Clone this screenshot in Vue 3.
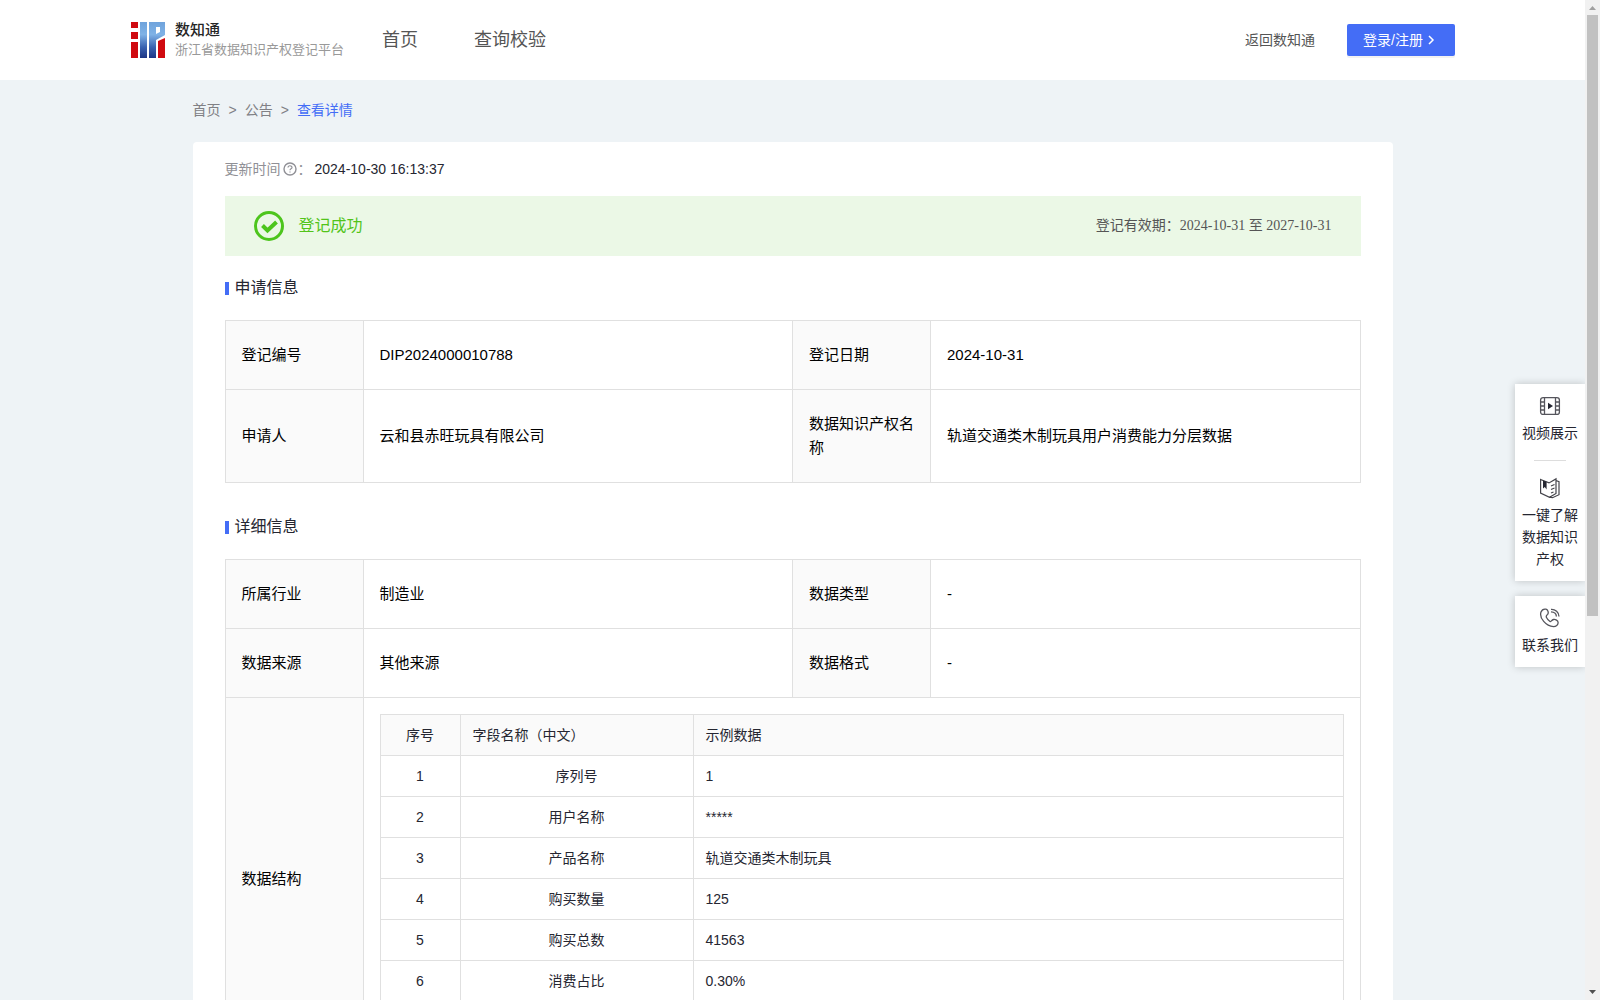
<script setup>
const applyRows = [
  ['登记编号', 'DIP2024000010788', '登记日期', '2024-10-31'],
  ['申请人', '云和县赤旺玩具有限公司', '数据知识产权名称', '轨道交通类木制玩具用户消费能力分层数据'],
]
const detailRows = [
  ['所属行业', '制造业', '数据类型', '-'],
  ['数据来源', '其他来源', '数据格式', '-'],
]
const fields = [
  ['1', '序列号', '1'],
  ['2', '用户名称', '*****'],
  ['3', '产品名称', '轨道交通类木制玩具'],
  ['4', '购买数量', '125'],
  ['5', '购买总数', '41563'],
  ['6', '消费占比', '0.30%'],
  ['', '', ''],
]
</script>

<template>
  <div class="window">
    <div class="page">
      <header class="header">
        <a class="brand" href="#">
          <svg class="logo" width="34" height="36" viewBox="0 0 34 36" aria-hidden="true">
            <defs>
              <linearGradient id="blue" gradientUnits="userSpaceOnUse" x1="0" y1="0" x2="0" y2="36">
                <stop offset="0" stop-color="#6fa3dc" />
                <stop offset="0.35" stop-color="#7fb2e6" />
                <stop offset="0.7" stop-color="#3a62b0" />
                <stop offset="1" stop-color="#1d3585" />
              </linearGradient>
            </defs>
            <path fill="#d00a10" d="M0 0h7v6H0zM0 10h7v7H0zM0 20h7v16H0zM27 19l7-3v20h-7z" />
            <path fill="url(#blue)" d="M9 0h7v36H9z" />
            <path fill="url(#blue)" fill-rule="evenodd" d="M18 0h16v13l-9 5v18h-7zM25 5v7l4-2V5z" />
          </svg>
          <span class="brand-text">
            <strong>数知通</strong>
            <small>浙江省数据知识产权登记平台</small>
          </span>
        </a>
        <nav class="nav">
          <a href="#">首页</a>
          <a href="#">查询校验</a>
        </nav>
        <a class="back" href="#">返回数知通</a>
        <button class="login" type="button">
          登录/注册
          <svg width="8" height="10" viewBox="0 0 8 10" aria-hidden="true">
            <path d="M2 1l4 4-4 4" fill="none" stroke="#fff" stroke-width="1.5" />
          </svg>
        </button>
      </header>

      <main class="main">
        <nav class="crumbs">
          <a href="#">首页</a><span>&gt;</span><a href="#">公告</a><span>&gt;</span><a class="current" href="#">查看详情</a>
        </nav>

        <section class="card">
          <div class="updated">
            <span>更新时间</span>
            <svg width="17" height="16" viewBox="0 0 17 16" fill="none" stroke="#909096" aria-hidden="true">
              <circle cx="9" cy="8" r="6" stroke-width="1.4" />
              <path d="M7 6.6c0-2.5 4-2.4 4-.2 0 1.5-2 1.300-2 2.800M9 10.400v1.200" stroke-width="1.2" />
            </svg>
            <span>：</span>
            <time>2024-10-30 16:13:37</time>
          </div>

          <div class="banner">
            <svg width="30" height="30" viewBox="0 0 30 30" fill="none" stroke="#4dc51d" aria-hidden="true">
              <circle cx="15" cy="15" r="13.500" stroke-width="3" />
              <path d="M8.500 14.500l5 5 9-8.500" stroke-width="4" />
            </svg>
            <span class="state">登记成功</span>
            <span class="valid">登记有效期：2024-10-31 至 2027-10-31</span>
          </div>

          <h2 class="title">申请信息</h2>
          <table class="info">
            <colgroup><col class="c-label"><col><col class="c-label"><col></colgroup>
            <tbody>
              <tr v-for="r in applyRows" :key="r[0]">
                <th scope="row">{{ r[0] }}</th><td>{{ r[1] }}</td>
                <th scope="row">{{ r[2] }}</th><td>{{ r[3] }}</td>
              </tr>
            </tbody>
          </table>

          <h2 class="title">详细信息</h2>
          <table class="info">
            <colgroup><col class="c-label"><col><col class="c-label"><col></colgroup>
            <tbody>
              <tr v-for="r in detailRows" :key="r[0]">
                <th scope="row">{{ r[0] }}</th><td>{{ r[1] }}</td>
                <th scope="row">{{ r[2] }}</th><td>{{ r[3] }}</td>
              </tr>
              <tr>
                <th scope="row">数据结构</th>
                <td class="nest" colspan="3">
                  <table class="fields">
                    <colgroup><col class="c-no"><col class="c-name"><col></colgroup>
                    <thead>
                      <tr>
                        <th class="mid" scope="col">序号</th>
                        <th scope="col">字段名称（中文）</th>
                        <th scope="col">示例数据</th>
                      </tr>
                    </thead>
                    <tbody>
                      <tr v-for="(f, i) in fields" :key="i">
                        <td class="mid">{{ f[0] }}</td>
                        <td class="mid">{{ f[1] }}</td>
                        <td>{{ f[2] }}</td>
                      </tr>
                    </tbody>
                  </table>
                </td>
              </tr>
            </tbody>
          </table>
        </section>
      </main>

      <aside class="dock">
        <div class="dock-card">
          <a class="dock-item" href="#">
            <svg width="22" height="22" viewBox="0 0 22 22" fill="none" stroke="#55555c" stroke-width="1.3" aria-hidden="true">
              <rect x="1.600" y="2.600" width="18.800" height="16.800" rx="2.500" />
              <path d="M5.500 2.600v16.800M16.500 2.600v16.800M1.600 7h3.900M1.600 11h3.900M1.600 15h3.900M16.500 7h3.900M16.500 11h3.900M16.500 15h3.900" />
              <path d="M9 7.800l5 3.200-5 3.200z" fill="#252631" stroke="none" />
            </svg>
            <span>视频展示</span>
          </a>
          <hr class="rule">
          <a class="dock-item" href="#">
            <svg width="22" height="22" viewBox="0 0 22 22" fill="none" stroke="#44444b" stroke-width="1.2" aria-hidden="true">
              <path d="M1.600 2.500l8.400 3.400 7-4v14.600l-6.500 3.700-8.900-4.200zM17 3.500l3 1.200v13l-6.500 3-3-.5" />
              <path d="M12 9l3.500-1.500M12 12.500l3.500-1.500M12 16l2.500-1" />
              <path d="M4 3.500v8l1.800-1.500 1.800 2.500V4.800z" fill="#252631" stroke="none" />
            </svg>
            <span>一键了解<br>数据知识<br>产权</span>
          </a>
        </div>
        <div class="dock-card">
          <a class="dock-item" href="#">
            <svg width="22" height="22" viewBox="0 0 22 22" fill="none" stroke="#55555c" stroke-width="1.3" aria-hidden="true">
              <path d="M2 5C3 2.500 5 1.800 7 2.200c2.300.8 2.800 4 1.500 5.300-1.300 1-1.800 1.500-1 3 1 2 2 3 3.500 4 1 .6 1.500-1.500 3.500-2 2-.3 4.500 1 4.600 3 .1 2.500-2.100 4.200-4.600 4.200C7 19.200 0 11 2 5z" />
              <path d="M12 2.300c4.300-.3 8 3 8 7.200M12 4.800c3 .1 5.300 2 5.400 4.700" />
            </svg>
            <span>联系我们</span>
          </a>
        </div>
      </aside>
    </div>

    <div class="scrollbar" aria-hidden="true">
      <i class="arrow up"></i>
      <div class="track"><div class="thumb"></div></div>
      <i class="arrow down"></i>
    </div>
  </div>
</template>

<style>
body {
  margin: 0;
  overflow: hidden;
}
</style>

<style scoped>
* {
  box-sizing: border-box;
}
.window {
  display: flex;
  height: 100vh;
  overflow: hidden;
  background: #eef3f6;
  color: #252631;
  font: 14px/20px "Liberation Sans", "Noto Sans CJK SC", sans-serif;
}
a {
  color: inherit;
  text-decoration: none;
}
svg {
  flex: none;
  display: block;
}
.page {
  position: relative;
  flex: 1;
  min-width: 0;
  overflow: hidden;
}
.header {
  display: flex;
  align-items: center;
  height: 80px;
  padding: 0 130px 0 131px;
  background: #fff;
  color: #555;
}
.brand {
  display: flex;
  align-items: center;
  gap: 10px;
}
.brand-text {
  display: flex;
  flex-direction: column;
}
.brand strong {
  color: #252525;
  font-size: 15px;
  font-weight: 500;
}
.brand small {
  color: #999;
  font-size: 13px;
}
.nav {
  display: flex;
  gap: 56px;
  flex: 1;
  padding-left: 38px;
  font-size: 18px;
  line-height: 24px;
}
.login {
  display: flex;
  align-items: center;
  justify-content: center;
  gap: 4px;
  width: 108px;
  height: 32px;
  margin-left: 32px;
  padding: 0 4px 0 0;
  border: 0;
  border-radius: 2px;
  background: #446df6;
  box-shadow: 0 2px 0 rgba(0, 0, 0, 0.05);
  color: #fff;
  font: inherit;
}
.main {
  max-width: 1200px;
  margin: 0 auto;
}
.crumbs {
  display: flex;
  gap: 8px;
  padding: 20px 0 22px;
  color: #808085;
}
.crumbs .current {
  color: #446df6;
}
.card {
  padding: 16px 32px 32px;
  border-radius: 4px;
  background: #fff;
}
.updated {
  display: flex;
  align-items: center;
  height: 22px;
  color: #909096;
}
.updated time {
  padding-left: 3px;
  color: #252631;
}
.banner {
  display: flex;
  align-items: center;
  height: 60px;
  margin-top: 16px;
  padding: 0 29px;
  background: #ebf8e6;
}
.state {
  flex: 1;
  padding-left: 15px;
  color: #52c41a;
  font-size: 16px;
}
.valid {
  color: #555;
  font-family: "Liberation Serif", "Noto Sans CJK SC", serif;
}
.title {
  display: flex;
  align-items: center;
  gap: 6px;
  height: 24px;
  margin: 20px 0;
  font-size: 16px;
  font-weight: 400;
}
.title::before {
  width: 4px;
  height: 13px;
  background: #446df6;
  content: "";
}
.info + .title {
  margin-top: 32px;
}
table {
  width: 100%;
  border-collapse: collapse;
  table-layout: fixed;
}
th,
td {
  border: 1px solid #e0e0e0;
  font-weight: 400;
  text-align: left;
  vertical-align: middle;
}
th {
  background: #fafafa;
}
.info th,
.info td {
  padding: 22px 16px;
  color: #000;
  font-size: 15px;
  line-height: 24px;
}
.c-label {
  width: 138px;
}
.info .nest {
  padding: 16px;
}
.info .fields th,
.info .fields td {
  height: 41px;
  padding: 10px 12px;
  color: #252631;
  font-size: 14px;
  line-height: 20px;
}
.c-no {
  width: 80px;
}
.c-name {
  width: 233px;
}
.info .fields .mid {
  text-align: center;
}
.dock {
  position: absolute;
  top: 384px;
  right: 0;
  display: flex;
  flex-direction: column;
  gap: 15px;
  width: 70px;
}
.dock-card {
  padding: 11px 0;
  background: #fff;
  box-shadow: 0 0 8px rgba(0, 0, 0, 0.2);
}
.dock-item {
  display: flex;
  flex-direction: column;
  align-items: center;
  gap: 5px;
  line-height: 22px;
  text-align: center;
}
.rule {
  width: 32px;
  height: 1px;
  margin: 16px auto;
  border: 0;
  background: #ddd;
}
.scrollbar {
  display: flex;
  flex: none;
  flex-direction: column;
  width: 15px;
  background: #f1f1f1;
}
.arrow {
  width: 7px;
  height: 4px;
  margin: 6px 4px 5px;
  background: #a0a0a0;
  clip-path: polygon(50% 0, 100% 100%, 0 100%);
}
.arrow.down {
  margin: 5px 4px 6px;
  background: #505050;
  clip-path: polygon(0 0, 100% 0, 50% 100%);
}
.track {
  flex: 1;
  padding: 0 2px;
}
.thumb {
  height: 62%;
  background: #c1c1c1;
}
</style>
